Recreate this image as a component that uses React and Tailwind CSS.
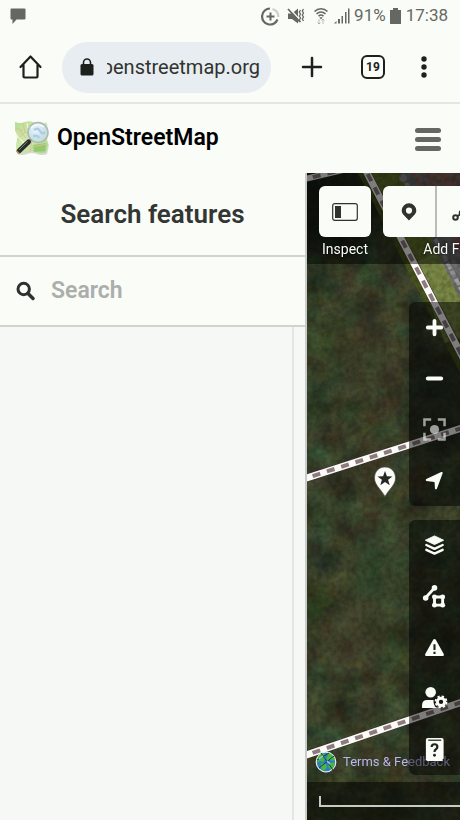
import React from "react";

function StatusBar() {
  return (
    <div className="flex h-8 items-center justify-between pl-[10px] pr-3 text-[17px] text-[#656862]">
      <svg width="16" height="17" viewBox="0 0 16 17" fill="currentColor" aria-hidden="true">
        <path d="M1.5 0.5h13a1 1 0 0 1 1 1v9a1 1 0 0 1-1 1H6.5L2.500 16v-4.500h-1a1 1 0 0 1-1-1v-9a1 1 0 0 1 1-1z" />
      </svg>
      <div className="flex items-center">
        <svg width="19" height="19" viewBox="0 0 19 19" fill="none" stroke="currentColor" strokeWidth="2.200" aria-hidden="true">
          <path d="M9 1.500a8 8 0 1 0 7.500 11" />
          <path d="M11.500 2a8 8 0 0 1 5.800 8" opacity=".3" />
          <path d="M9.500 5.500v8M5.500 9.500h8" strokeWidth="2" />
        </svg>
        <svg className="ml-[7px]" width="18" height="18" viewBox="0 0 18 18" aria-hidden="true">
          <path d="M1 6.500h4L11 1.500v15L5 12H1z" fill="currentColor" />
          <path d="M2 1l12 13" stroke="#f9fcf7" strokeWidth="1.500" />
          <path d="M1 2l12 13" stroke="currentColor" strokeWidth="1.800" />
          <path d="M13.500 3l-1.200 2 1.200 2-1.200 2 1.200 2-1.200 2 1.200 2M16.500 2l-1.200 2 1.200 2-1.200 2 1.200 2-1.200 2 1.200 2" fill="none" stroke="currentColor" strokeWidth="1.300" />
        </svg>
        <svg className="ml-2" width="16" height="18" viewBox="0 0 16 18" fill="none" stroke="currentColor" strokeWidth="1.500" aria-hidden="true">
          <path d="M1.500 4.500C5 .8 11 .8 14.500 4.500M3.500 7C6 4.300 10 4.300 12.500 7M5.500 9.200c1.500-1.500 3.500-1.500 5 0" />
          <path d="M8 12.500L6.300 10.200h3.400z" fill="currentColor" stroke="none" />
          <path d="M6 12v5M4.500 15.500L6 17l1.500-1.500M10 17v-5M8.500 13.500L10 12l1.500 1.500" strokeWidth="1" opacity=".4" />
        </svg>
        <svg className="ml-1" width="18" height="18" viewBox="0 0 18 18" fill="currentColor" aria-hidden="true">
          <path d="M1 16.500l2.500-2.500v2.500zM5 12h2v4.500H5zM8.500 9h1.500v7.500H8.500zM12 5h1.500v11.500H12zM15 1.500h1.500v15H15z" />
        </svg>
        <span className="ml-[3px]">91%</span>
        <svg className="mx-1" width="11" height="16" viewBox="0 0 11 16" fill="currentColor" aria-hidden="true">
          <path d="M3 0h5v2h3v14H0V2h3z" />
        </svg>
        <span className="ml-px">17:38</span>
      </div>
    </div>
  );
}

function BrowserBar() {
  return (
    <div className="flex h-[72px] items-center border-b-2 border-[#e3e6e2] pl-[18px] pr-6 text-[#1d201c]">
      <button aria-label="Home" className="mr-[18px]">
        <svg width="26" height="26" viewBox="0 0 26 26" fill="none" stroke="currentColor" strokeWidth="2.200" strokeLinejoin="round" strokeLinecap="round">
          <path d="M2.500 13L12.500 2.500L22.500 13M5.500 11v11.500q0 1 1 1h12q1 0 1-1V11" />
        </svg>
      </button>
      <div className="flex h-[51px] min-w-0 flex-1 items-center gap-[13px] rounded-full bg-[#e8edf1] pl-[18px] pr-[11px]">
        <svg className="shrink-0" width="14" height="18" viewBox="0 0 14 18" aria-hidden="true">
          <path d="M3.500 7V4.500a3.500 3.500 0 0 1 7 0V7" fill="none" stroke="currentColor" strokeWidth="1.600" />
          <rect x=".5" y="6" width="13" height="11.500" rx="1.500" fill="currentColor" />
        </svg>
        <input dir="rtl" aria-label="Address" defaultValue="openstreetmap.org" className="w-0 min-w-0 flex-1 bg-transparent text-xl text-[#30332f] outline-none" />
      </div>
      <button aria-label="New tab" className="ml-[30px]">
        <svg width="22" height="22" viewBox="0 0 22 22" stroke="currentColor" strokeWidth="2.500" strokeLinecap="round">
          <path d="M11 2v18M2 11h18" />
        </svg>
      </button>
      <button aria-label="Tabs" className="ml-[38px] flex size-6 items-center justify-center rounded-md border-2 border-[#1d201c] text-xs font-bold">19</button>
      <button aria-label="More" className="ml-[27px] px-2">
        <svg width="8" height="24" viewBox="0 0 8 24" fill="currentColor">
          <circle cx="4" cy="4" r="2.700" /><circle cx="4" cy="12" r="2.700" /><circle cx="4" cy="20" r="2.700" />
        </svg>
      </button>
    </div>
  );
}

function Logo() {
  return (
    <svg width="38" height="38" viewBox="0 0 38 38" aria-hidden="true">
      <defs>
        <radialGradient id="lens" cx=".4" cy=".35" r=".7">
          <stop offset="0" stopColor="#eef7f8" />
          <stop offset=".6" stopColor="#c9e2ea" />
          <stop offset="1" stopColor="#c3e2c6" />
        </radialGradient>
        <linearGradient id="sheet" x1="0" y1="0" x2="1" y2="1">
          <stop offset="0" stopColor="#b4dd90" />
          <stop offset=".5" stopColor="#d3e9b0" />
          <stop offset="1" stopColor="#a5d382" />
        </linearGradient>
      </defs>
      <path d="M4 4q5 2 10 0t11 1 10-1l1 11q-2 6 1 11l-2 9q-5 2-10 0t-10 0-9 0q-2-6 0-12t-2-9z" fill="#d4d8cc" />
      <path d="M3 3q5 2 10 0t11 1 10-1l1 11q-2 6 1 11l-2 8q-5 2-10 0t-10 0-9 0q-2-6 0-12t-2-9z" fill="url(#sheet)" />
      <path d="M21 26l13-2-1 8-11 1z" fill="#93c96e" />
      <path d="M11 4l2 9-8 8M13 13l5 2M8 12l6 7M20 21l-2 12M20 28l14-3M4 9l7 3" fill="none" stroke="#d9c290" strokeWidth="1" />
      <path d="M15 4l1 5M4 16l8 8" stroke="#eef6d8" strokeWidth="1.200" />
      <circle cx="26" cy="13.500" r="10" fill="url(#lens)" stroke="#aeb9b7" strokeWidth="1.500" />
      <path d="M22 11q4-3 6 1t5 1M21 17q5-1 6 2" stroke="#aecbe9" strokeWidth="2.500" fill="none" />
      <path d="M19 9q5-6 13-1" stroke="#fff" strokeWidth="1.500" fill="none" opacity=".8" />
      <path d="M19 20.500l-3 3" stroke="#8d928e" strokeWidth="2.500" />
      <path d="M16.500 23L7 32" stroke="#292d2c" strokeWidth="5" strokeLinecap="round" />
      <path d="M15.500 22.500L7 31" stroke="#777c78" strokeWidth="1" />
      <path d="M4.500 32l3 3" stroke="#c9ab4c" strokeWidth="1.200" />
    </svg>
  );
}

function SiteHeader() {
  return (
    <header className="flex h-[69px] items-center justify-between pb-px pl-3 pr-[19px]">
      <a href="#home" className="flex items-center gap-[7px] text-[23px] font-semibold text-black">
        <Logo />
        OpenStreetMap
      </a>
      <button aria-label="Menu" className="flex w-[26px] flex-col gap-1 pt-0.5">
        <span className="h-[5px] rounded-sm bg-[#656862]" />
        <span className="h-[5px] rounded-sm bg-[#656862]" />
        <span className="h-[5px] rounded-sm bg-[#656862]" />
      </button>
    </header>
  );
}

function Sidebar() {
  return (
    <aside className="flex w-[307px] shrink-0 flex-col border-r-2 border-[#c9ccc9]">
      <h2 className="flex h-[84px] items-center justify-center border-b-2 border-[#d0d4d0] text-[26px] font-semibold text-[#333633]">
        Search features
      </h2>
      <label className="flex h-[70px] items-center border-b-2 border-[#d0d4d0] pl-4">
        <svg width="20" height="20" viewBox="0 0 20 20" fill="none" stroke="#2e312e" strokeWidth="3" strokeLinecap="round" aria-hidden="true">
          <circle cx="7.700" cy="8" r="5.700" />
          <path d="M12 12.500l5 5" strokeWidth="3.500" />
        </svg>
        <input type="search" aria-label="Search" placeholder="Search" className="ml-[15px] min-w-0 flex-1 bg-transparent text-[23px] font-semibold outline-none placeholder:text-[#abaeab]" />
      </label>
      <div className="flex flex-1 bg-[#f6f8f6]">
        <div className="flex-1 border-r-2 border-[#e3e6e3]" />
        <div className="w-[11px]" />
      </div>
    </aside>
  );
}

function Way({ d, width }) {
  return (
    <g fill="none">
      <path d={d} stroke="#342f2c" strokeWidth={width + 1} />
      <path d={d} stroke="#fbfaf7" strokeWidth={width} />
      <path d={d} stroke="#8d7b7e" strokeWidth="4" strokeDasharray="8 7" strokeDashoffset="7" />
    </g>
  );
}

function AerialMap() {
  return (
    <svg className="absolute inset-0 h-full w-full" aria-hidden="true">
      <defs>
        <filter id="canopy" x="0" y="0" width="100%" height="100%" colorInterpolationFilters="sRGB">
          <feTurbulence type="fractalNoise" baseFrequency=".04" numOctaves="5" seed="12" />
          <feColorMatrix values=".16 .14 0 0 .08  0 .26 0 0 .13  0 .14 .06 0 .07  0 0 0 0 1" />
        </filter>
        <filter id="soft" x="-50%" y="-50%" width="200%" height="200%">
          <feGaussianBlur stdDeviation="12" />
        </filter>
        <filter id="grain" x="0" y="0" width="100%" height="100%" colorInterpolationFilters="sRGB">
          <feTurbulence type="fractalNoise" baseFrequency=".2" numOctaves="3" seed="4" />
          <feColorMatrix values="0 0 0 0 .05  0 0 0 0 .06  0 0 0 0 .02  1.500 0 0 0 -.5" />
        </filter>
      </defs>
      <rect width="100%" height="100%" filter="url(#canopy)" />
      <g filter="url(#soft)">
        <ellipse cx="15" cy="35" rx="60" ry="50" fill="#11170b" opacity=".75" />
        <ellipse cx="15" cy="175" rx="22" ry="40" fill="#365029" opacity=".4" />
        <ellipse cx="65" cy="180" rx="30" ry="50" fill="#443a2b" opacity=".4" />
        <ellipse cx="75" cy="290" rx="30" ry="28" fill="#443629" opacity=".4" />
        <ellipse cx="70" cy="400" rx="30" ry="50" fill="#36502f" opacity=".4" />
        <ellipse cx="45" cy="460" rx="24" ry="32" fill="#5b4733" opacity=".4" />
        <ellipse cx="8" cy="430" rx="12" ry="26" fill="#172508" opacity=".5" />
        <ellipse cx="130" cy="230" rx="35" ry="55" fill="#1f261b" opacity=".6" />
        <ellipse cx="130" cy="460" rx="30" ry="60" fill="#262b1c" opacity=".4" />
        <ellipse cx="60" cy="640" rx="90" ry="25" fill="#2b3219" opacity=".5" />
      </g>
      <path d="M51 0L153 200L800 1480V0z" fill="#47541b" />
      <path d="M62 0L160 180L800 1360V0z" fill="#66752c" />
      <path d="M108 90l22-10 24 40v45l-16 5z" fill="#879458" opacity=".6" />
      <path d="M92 0L155 130L800 1300V0z" fill="#706e71" />
      <path d="M115 0L153 82L800 1200V0z" fill="#81645f" />
      <path d="M107 0l48 80M134 0l30 42" stroke="#c3463d" strokeWidth="1.200" />
      <path d="M95 2l60 116" stroke="#aeb0b0" strokeWidth="4" strokeDasharray="7 2" opacity=".75" />
      <circle cx="96" cy="5" r="4" fill="#91948f" />
      <rect width="100%" height="100%" filter="url(#grain)" opacity=".35" />
      <Way d="M-2 6L40 -4" width={6} />
      <Way d="M57 -6L155 183L300 463" width={7} />
      <Way d="M-2 305.500L155 255L800 48" width={7} />
      <Way d="M-2 582.500L155 529L800 309" width={7} />
    </svg>
  );
}

function Tool({ label, children, className = "" }) {
  return (
    <button aria-label={label} className={"flex h-[51px] w-[52px] items-center justify-center bg-[#f9fcf7] text-[#2f332e] " + className}>
      {children}
    </button>
  );
}

function Toolbar() {
  return (
    <div className="relative flex h-[91px] gap-3 overflow-hidden bg-black/50 pl-3 pt-[13px] text-sm text-[#f9fcf7] [text-shadow:0_0_2px_#000]">
      <div className="flex shrink-0 flex-col items-center gap-0.5">
        <Tool label="Toggle inspector" className="rounded-md">
          <svg width="26" height="18" viewBox="0 0 26 18">
            <rect x=".7" y=".7" width="24.600" height="16.600" rx="2" fill="none" stroke="currentColor" strokeWidth="1.200" />
            <path d="M3 3h6v12H3z" fill="currentColor" />
          </svg>
        </Tool>
        <span>Inspect</span>
      </div>
      <div className="flex shrink-0 flex-col items-center gap-0.5">
        <div className="flex">
          <Tool label="Point" className="rounded-l-md">
            <svg width="16" height="18" viewBox="0 0 16 18" fill="currentColor">
              <path fillRule="evenodd" d="M8 .3A7.300 7.300 0 0 1 15.300 7.600C15.300 11.500 11 14 8 17.500C5 14 .7 11.500 .7 7.600A7.300 7.300 0 0 1 8 .3zM8 4.500a3.100 3.100 0 1 0 0 6.200 3.100 3.100 0 0 0 0-6.200z" />
            </svg>
          </Tool>
          <Tool label="Line" className="border-l-2 border-[#b9bcb8]">
            <svg width="20" height="20" viewBox="0 0 20 20" fill="none" stroke="currentColor" strokeWidth="2">
              <circle cx="3.500" cy="15.500" r="2.300" /><circle cx="10" cy="11" r="2.300" /><circle cx="16.500" cy="3.500" r="2.300" />
              <path d="M5.500 14l2.500-1.500M11.500 9.500L15 5.500" />
            </svg>
          </Tool>
          <Tool label="Area" className="rounded-r-md border-l-2 border-[#b9bcb8]">
            <svg width="20" height="20" viewBox="0 0 20 20" fill="none" stroke="currentColor" strokeWidth="2">
              <path d="M4 4h12v12H4z" /><path d="M2 2h4v4H2zM14 2h4v4h-4zM2 14h4v4H2zM14 14h4v4h-4z" fill="#f9fcf7" />
            </svg>
          </Tool>
        </div>
        <span>Add Feature</span>
      </div>
    </div>
  );
}

const icons = {
  plus: <path d="M12 5v14M5 12h14" fill="none" stroke="currentColor" strokeWidth="4" strokeLinecap="round" />,
  minus: <path d="M5 12h14" fill="none" stroke="currentColor" strokeWidth="4" strokeLinecap="round" />,
  focus: (
    <g opacity=".6">
      <path d="M1.500 8.500V1.500h7M15.500 1.500h7v7M22.500 15.500v7h-7M8.500 22.500H1.500v-7" fill="none" stroke="currentColor" strokeWidth="2.600" />
      <circle cx="12" cy="12" r="4.800" />
    </g>
  ),
  locate: <path d="M20.500 4.500L14.500 20.500Q13.500 22 12.500 20.500L12 13.500L3.500 12.500Q1.800 11.500 3.500 10.500L19 3.200Q21 3 20.500 4.500z" />,
  layers: (
    <>
      <path d="M12 2l9.500 4.500-9.500 4.500L2.500 6.500z" stroke="currentColor" strokeLinejoin="round" />
      <path d="M3.500 11.500L12 15.500l8.500-4M3.500 16.500L12 20.500l8.500-4" fill="none" stroke="currentColor" strokeWidth="2.500" strokeLinejoin="round" strokeLinecap="round" />
    </>
  ),
  data: (
    <>
      <path d="M2.500 13.500L12 3" stroke="currentColor" strokeWidth="3" />
      <circle cx="2.800" cy="13.500" r="2.900" /><circle cx="12" cy="3" r="2.900" />
      <path d="M12 12.500h8.500v8.500H12z" fill="none" stroke="currentColor" strokeWidth="3" />
      <circle cx="12" cy="12.500" r="2.600" /><circle cx="20.500" cy="12.500" r="2.600" /><circle cx="12" cy="21" r="2.600" /><circle cx="20.500" cy="21" r="2.600" />
    </>
  ),
  issues: (
    <>
      <path d="M12 3Q12.800 3 13.200 3.700L21.800 19q.5 1.800-1 1.800h-17.600q-1.500 0-1-1.800l8.600-15.300q.4-.7 1.200-.7z" />
      <path d="M12 8.500v6M12 16.500v2.300" stroke="#20251a" strokeWidth="2.200" />
    </>
  ),
  preferences: (
    <>
      <circle cx="8" cy="5.500" r="5.500" />
      <path d="M-1 22v-3q0-5.500 5.500-5.500h6.500q-.5 5 3 8.500z" />
      <circle cx="18.800" cy="15.500" r="3.800" fill="none" stroke="currentColor" strokeWidth="3" />
      <circle cx="18.800" cy="15.500" r="5.700" fill="none" stroke="currentColor" strokeWidth="2" strokeDasharray="2.400 2.080" />
    </>
  ),
  help: (
    <>
      <path d="M5 0h14.500q2 0 2 2v19q0 1-1 1v2H5q-2 0-2-2V2q0-2 2-2z" />
      <path d="M5.500 2.300H19" stroke="#20251a" strokeWidth="1.300" />
      <path d="M9 9.500q0-3 3-3t3 2.700q0 1.600-1.500 2.500T12 14.500" fill="none" stroke="#20251a" strokeWidth="2.300" />
      <circle cx="12" cy="18" r="1.500" fill="#20251a" />
    </>
  ),
};

function ControlGroup({ items }) {
  return (
    <div className="flex flex-col rounded-l-md bg-black/50">
      {items.map(([name, label]) => (
        <button key={name} aria-label={label} className="flex h-[51px] w-[51px] items-center justify-center text-[#f9fcf7]">
          <svg className="overflow-visible" width="23" height="23" viewBox="0 0 24 24" fill="currentColor">{icons[name]}</svg>
        </button>
      ))}
    </div>
  );
}

function MapPane() {
  return (
    <main className="relative flex min-w-0 flex-1 flex-col overflow-hidden">
      <AerialMap />
      <Toolbar />
      <svg className="absolute left-[66px] top-[293px]" width="24" height="32" viewBox="0 0 24 32" aria-hidden="true">
        <path d="M12 1C18 1 22.500 5.500 22.500 12C22.500 19 16.500 22.500 12 30.500C7.500 22.500 1.500 19 1.500 12C1.500 5.500 6 1 12 1z" fill="#fbfcf8" stroke="#4d5147" strokeWidth=".7" />
        <path d="M12 5l1.900 5.200 5.600.2-4.400 3.400 1.600 5.400-4.700-3.200-4.700 3.200 1.600-5.400-4.400-3.400 5.600-.2z" fill="#242722" />
      </svg>
      <a href="#terms" className="relative mt-auto flex items-center gap-[6px] pb-[9px] pl-2 text-[13px] whitespace-nowrap text-[#bbb5ee]">
        <svg className="shrink-0" width="22" height="22" viewBox="0 0 22 22" aria-hidden="true">
          <circle cx="11" cy="11" r="9.800" fill="#2c7fc4" stroke="#e7ece3" strokeWidth="1.200" />
          <path d="M3 6l4-4 3 1-1 3 2 1-3 4-3-1-3 2zM12 2l4 1 4 5-3 2-3-2-1 2-2-3 2-2zM6 12l5 1 1 3-3 4-3-3zM15 12l5-1-2 6-3 1-2-3z" fill="#4bb63b" />
          <path d="M6 2l12 17M2 9l12-7M4 17l15-12" stroke="#183c5b" strokeWidth="1" fill="none" />
          <path d="M4 8l4-3M12 10l3 3" stroke="#91d2f2" strokeWidth="1.500" />
        </svg>
        Terms &amp; Feedback
      </a>
      <footer className="relative h-[38px] bg-black/50 pl-3 pt-[14px]">
        <div className="h-[11px] border-b-2 border-l-2 border-[#c8cac5]" />
      </footer>
      <div className="absolute right-0 top-[129px] flex flex-col gap-[14px]">
        <ControlGroup items={[["plus", "Zoom in"], ["minus", "Zoom out"], ["focus", "Zoom to selection"], ["locate", "My location"]]} />
        <ControlGroup items={[["layers", "Background"], ["data", "Map data"], ["issues", "Issues"], ["preferences", "Preferences"], ["help", "Help"]]} />
      </div>
    </main>
  );
}

export default function App() {
  return (
    <div className="flex min-h-screen flex-col bg-[#f9fcf7] font-['Roboto',sans-serif]">
      <StatusBar />
      <BrowserBar />
      <SiteHeader />
      <div className="flex flex-1">
        <Sidebar />
        <MapPane />
      </div>
    </div>
  );
}
